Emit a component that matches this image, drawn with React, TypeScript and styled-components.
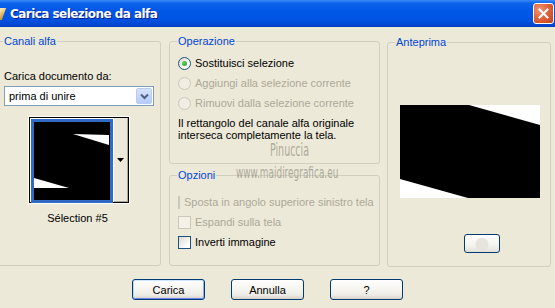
import * as React from 'react';
import styled, { createGlobalStyle } from 'styled-components';

const GlobalStyle = createGlobalStyle`
  html, body {
    margin: 0;
    padding: 0;
    background: #ece9d8;
  }
  body {
    font-family: 'Liberation Sans', Arial, sans-serif;
    font-size: 11px;
  }
`;

const App = () => (
  <Window>
    <GlobalStyle />
    <TitleBar>
      <TitleIcon />
      <TitleText>Carica selezione da alfa</TitleText>
      <CloseButton aria-label="close">
        <svg width="11" height="11" viewBox="0 0 11 11">
          <path d="M1.5 1.5 L9.5 9.5 M9.5 1.5 L1.5 9.5" stroke="#fff" strokeWidth="2" strokeLinecap="square" />
        </svg>
      </CloseButton>
    </TitleBar>

    <Body>
      <Group $width={166} $offset={-5}>
        <Legend>Canali alfa</Legend>
        <LeftContent>
          <FieldLabel>Carica documento da:</FieldLabel>
          <Select>
            <SelectValue>prima di unire</SelectValue>
            <SelectArrow>
              <svg width="9" height="7" viewBox="0 0 9 7">
                <path d="M1 1.5 L4.5 5 L8 1.5" stroke="#4d6185" strokeWidth="2" fill="none" />
              </svg>
            </SelectArrow>
          </Select>
          <ThumbPicker>
            <ThumbFrame>
              <svg width="76" height="76" viewBox="0 0 76 76">
                <rect width="76" height="76" fill="#000" />
                <polygon points="39,11 75,12 75,22" fill="#fff" />
                <polygon points="0,55 35,65 0,65" fill="#fff" />
              </svg>
            </ThumbFrame>
            <ThumbDrop>
              <svg width="7" height="4" viewBox="0 0 7 4">
                <polygon points="0,0 7,0 3.5,4" fill="#000" />
              </svg>
            </ThumbDrop>
          </ThumbPicker>
          <Caption>Sélection #5</Caption>
        </LeftContent>
      </Group>

      <MiddleColumn>
        <Group $width={211} $height={129}>
          <Legend>Operazione</Legend>
          <OptionList $top={5}>
            <OptionRow>
              <Radio $checked />
              <OptionText>Sostituisci selezione</OptionText>
            </OptionRow>
            <OptionRow>
              <Radio $disabled />
              <OptionText $disabled>Aggiungi alla selezione corrente</OptionText>
            </OptionRow>
            <OptionRow>
              <Radio $disabled />
              <OptionText $disabled>Rimuovi dalla selezione corrente</OptionText>
            </OptionRow>
            <Note>
              Il rettangolo del canale alfa originale
              <br />
              interseca completamente la tela.
            </Note>
          </OptionList>
        </Group>
        <Group $width={211} $height={97}>
          <Legend>Opzioni</Legend>
          <OptionList $top={10}>
            <OptionRow>
              <Checkbox $disabled />
              <OptionText $disabled>Sposta in angolo superiore sinistro tela</OptionText>
            </OptionRow>
            <OptionRow>
              <Checkbox $disabled />
              <OptionText $disabled>Espandi sulla tela</OptionText>
            </OptionRow>
            <OptionRow>
              <Checkbox />
              <OptionText>Inverti immagine</OptionText>
            </OptionRow>
          </OptionList>
        </Group>
      </MiddleColumn>

      <Group $width={164} $top={1}>
        <Legend>Anteprima</Legend>
        <PreviewContent>
          <svg width="140" height="93" viewBox="0 0 140 93">
            <rect width="140" height="93" fill="#000" />
            <polygon points="69,0 140,0 140,20" fill="#fff" />
            <polygon points="0,74 68,93 0,93" fill="#fff" />
          </svg>
          <SmallButton />
        </PreviewContent>
      </Group>
    </Body>

    <ButtonRow>
      <PushButton $default>Carica</PushButton>
      <PushButton>Annulla</PushButton>
      <PushButton>?</PushButton>
    </ButtonRow>

    <Watermark $x={270} $y={142} $size={17}>Pinuccia</Watermark>
    <Watermark $x={236} $y={165} $size={16}>www.maidiregrafica.eu</Watermark>
  </Window>
);

export default App;

const Window = styled.div`
  position: relative;
  width: 555px;
  height: 308px;
  overflow: hidden;
  background: #ece9d8;
  color: #000;
`;

const TitleBar = styled.div`
  height: 27px;
  display: flex;
  align-items: center;
  background: linear-gradient(
    #3c8cf6 0%,
    #0d62ea 12%,
    #0057e6 40%,
    #0054e3 70%,
    #0049d4 90%,
    #003ec0 100%
  );
`;

const TitleIcon = styled.div`
  width: 6px;
  height: 12px;
  margin-left: -2px;
  margin-right: 6px;
  background: linear-gradient(135deg, #fff4c0, #c98a2a);
  transform: skewX(-20deg);
`;

const TitleText = styled.div`
  flex: 1;
  color: #fff;
  font-family: 'DejaVu Sans', 'Liberation Sans', sans-serif;
  font-weight: bold;
  font-size: 12px;
  letter-spacing: -0.55px;
  text-shadow: 1px 1px 0 #0a1e8c;
`;

const CloseButton = styled.div`
  width: 19px;
  height: 19px;
  margin-right: 1px;
  border: 1px solid #fff;
  border-radius: 3px;
  display: flex;
  align-items: center;
  justify-content: center;
  background: radial-gradient(circle at 30% 30%, #f09676 0%, #e2643c 45%, #c1411a 100%);
`;

const Body = styled.div`
  display: flex;
  gap: 7px;
  padding-top: 8px;
  align-items: flex-start;
`;

const MiddleColumn = styled.div`
  display: flex;
  flex-direction: column;
  gap: 5px;
  margin-left: 1px;
`;

const Group = styled.fieldset<{ $width: number; $height?: number; $offset?: number; $top?: number }>`
  box-sizing: border-box;
  width: ${(p) => p.$width}px;
  height: ${(p) => p.$height ?? 231}px;
  margin: ${(p) => p.$top ?? 0}px 0 0 ${(p) => p.$offset ?? 0}px;
  padding: 0 7px;
  border: 1px solid #d0d0bf;
  border-radius: 3px;
  min-width: 0;
`;

const Legend = styled.legend`
  padding: 0 1px;
  margin-left: 0;
  color: #0046d5;
  line-height: 13px;
`;

const LeftContent = styled.div`
  display: flex;
  flex-direction: column;
  padding-top: 22px;
  padding-left: 1px;
`;

const FieldLabel = styled.div`
  line-height: 13px;
`;

const Select = styled.div`
  box-sizing: border-box;
  margin-top: 3px;
  width: 150px;
  height: 20px;
  border: 1px solid #7f9db9;
  background: #fff;
  display: flex;
  align-items: center;
  padding: 1px;
`;

const SelectValue = styled.div`
  flex: 1;
  padding-left: 3px;
  line-height: 16px;
`;

const SelectArrow = styled.div`
  box-sizing: border-box;
  width: 16px;
  height: 16px;
  border: 1px solid #b9cdf4;
  border-radius: 2px;
  background: linear-gradient(#d7e3fd, #b6cbf8);
  display: flex;
  align-items: center;
  justify-content: center;
`;

const ThumbPicker = styled.div`
  box-sizing: border-box;
  align-self: center;
  margin-top: 11px;
  width: 100px;
  height: 86px;
  display: flex;
  border: 1px solid #000;
  outline: 1px solid #fff;
  outline-offset: 0;
  box-shadow: inset 1px 1px 0 #fff;
`;

const ThumbFrame = styled.div`
  box-sizing: border-box;
  width: 82px;
  height: 84px;
  margin: 1px 0 0 1px;
  border: 3px solid #316ac5;
  display: flex;
  align-items: center;
  justify-content: center;
  background: #000;
  svg {
    display: block;
  }
`;

const ThumbDrop = styled.div`
  flex: 1;
  display: flex;
  align-items: center;
  justify-content: center;
  border-left: 1px solid #fff;
  box-shadow: inset -1px -1px 0 #aca899;
  background: #ece9d8;
`;

const Caption = styled.div`
  margin-top: 9px;
  line-height: 13px;
  text-align: center;
  padding-right: 2px;
`;

const OptionList = styled.div<{ $top: number }>`
  display: flex;
  flex-direction: column;
  padding-top: ${(p) => p.$top}px;
  padding-left: 1px;
`;

const OptionRow = styled.div`
  height: 20px;
  display: flex;
  align-items: center;
  gap: 4px;
`;

const Radio = styled.div<{ $checked?: boolean; $disabled?: boolean }>`
  box-sizing: border-box;
  width: 13px;
  height: 13px;
  border-radius: 50%;
  border: 1px solid ${(p) => (p.$disabled ? '#cac8bb' : '#1c5180')};
  background: ${(p) =>
    p.$disabled
      ? '#f0eee4'
      : 'linear-gradient(135deg, #dcd9cc, #fff 80%)'};
  display: flex;
  align-items: center;
  justify-content: center;
  &::after {
    content: '';
    display: ${(p) => (p.$checked ? 'block' : 'none')};
    width: 5px;
    height: 5px;
    border-radius: 50%;
    background: radial-gradient(circle at 35% 35%, #5bd35b, #21a121);
  }
`;

const Checkbox = styled.div<{ $disabled?: boolean }>`
  box-sizing: border-box;
  width: 13px;
  height: 13px;
  border: 1px solid ${(p) => (p.$disabled ? '#cac8bb' : '#1c5180')};
  background: ${(p) =>
    p.$disabled ? '#f3f1e8' : 'linear-gradient(135deg, #dcd9cc, #fff 80%)'};
`;

const OptionText = styled.span<{ $disabled?: boolean }>`
  color: ${(p) => (p.$disabled ? '#aca899' : '#000')};
  white-space: nowrap;
`;

const Note = styled.div`
  margin-top: 4px;
  line-height: 12px;
`;

const PreviewContent = styled.div`
  display: flex;
  flex-direction: column;
  align-items: flex-start;
  padding: 56px 0 0 5px;
  svg {
    display: block;
  }
`;

const SmallButton = styled.div`
  box-sizing: border-box;
  margin: 36px 0 0 64px;
  width: 36px;
  height: 19px;
  border: 1px solid #003c74;
  border-radius: 3px;
  background:
    radial-gradient(circle at 50% 55%, #e6e4dc 0 6px, transparent 7px),
    linear-gradient(#fff, #f4f3ee 60%, #e3e0d6);
`;

const ButtonRow = styled.div`
  display: flex;
  gap: 26px;
  padding: 12px 0 0 132px;
`;

const PushButton = styled.div<{ $default?: boolean }>`
  box-sizing: border-box;
  width: 73px;
  height: 21px;
  border: 1px solid #003c74;
  border-radius: 3px;
  display: flex;
  align-items: center;
  justify-content: center;
  background: linear-gradient(#fff, #f5f4ef 50%, #ecebe6 80%, #d6d0c5);
  box-shadow: ${(p) =>
    p.$default ? 'inset 0 1px 0 #cee7ff, inset 1px 0 0 #bcd4f6, inset -1px 0 0 #89ade4, inset 0 -1px 0 #6982ee' : 'none'};
`;

const Watermark = styled.div<{ $x: number; $y: number; $size: number }>`
  position: absolute;
  left: ${(p) => p.$x}px;
  top: ${(p) => p.$y}px;
  font-family: 'DejaVu Sans Condensed', 'DejaVu Sans', sans-serif;
  font-stretch: condensed;
  font-size: ${(p) => p.$size}px;
  line-height: ${(p) => p.$size}px;
  color: rgba(150, 146, 135, 0.75);
  transform: scaleX(0.62);
  transform-origin: left top;
  white-space: nowrap;
  pointer-events: none;
`;
